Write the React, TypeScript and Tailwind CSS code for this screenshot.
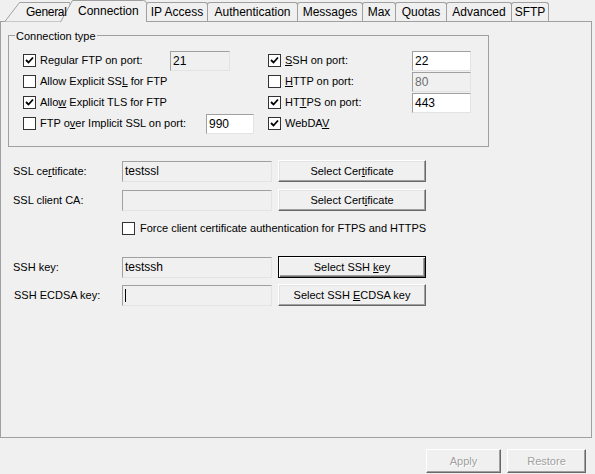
import React from "react";

const tabs = [
  { label: "IP Access", w: "w-[62px]" },
  { label: "Authentication", w: "w-[91px]" },
  { label: "Messages", w: "w-[66px]" },
  { label: "Max", w: "w-[34px]" },
  { label: "Quotas", w: "w-[52px]" },
  { label: "Advanced", w: "w-[66px]" },
  { label: "SFTP", w: "w-[38px]" },
];

function Check({ checked }: { checked?: boolean }) {
  return (
    <span className="flex h-[13px] w-[13px] shrink-0 items-center justify-center border border-[#333] bg-white">
      {checked && (
        <svg width="11" height="11" viewBox="0 0 11 11">
          <polyline points="2,5 4.5,7.5 9,2.5" fill="none" stroke="#000" strokeWidth="1.8" />
        </svg>
      )}
    </span>
  );
}

function Edit({
  value,
  className,
  white,
  dim,
}: {
  value?: React.ReactNode;
  className: string;
  white?: boolean;
  dim?: boolean;
}) {
  return (
    <div
      className={`flex shrink-0 items-center border border-t-[#a0a0a0] border-l-[#a0a0a0] border-r-[#e3e3e3] border-b-[#e3e3e3] pl-[2px] text-[12px] ${
        white ? "bg-white" : "bg-[#f0f0f0]"
      } ${dim ? "text-[#6d6d6d]" : "text-black"} ${className}`}
    >
      {value}
    </div>
  );
}

function Btn({ children, def }: { children: React.ReactNode; def?: boolean }) {
  return (
    <div
      className={`ml-[6px] flex h-[22px] w-[148px] shrink-0 items-center justify-center bg-[#f0f0f0] ${
        def
          ? "border border-black shadow-[inset_1px_1px_0_#fff,inset_-1px_-1px_0_#696969,inset_-2px_-2px_0_#a0a0a0]"
          : "border border-t-white border-l-white border-r-[#696969] border-b-[#696969] shadow-[inset_-1px_-1px_0_#a0a0a0,inset_1px_1px_0_#e3e3e3]"
      }`}
    >
      <span className="whitespace-pre">{children}</span>
    </div>
  );
}

function CheckRow({
  checked,
  label,
  lw,
  children,
}: {
  checked?: boolean;
  label: React.ReactNode;
  lw: string;
  children?: React.ReactNode;
}) {
  return (
    <div className="flex h-[21px] items-center">
      <Check checked={checked} />
      <span className={`ml-[4px] whitespace-nowrap ${lw}`}>{label}</span>
      {children}
    </div>
  );
}

export default function App() {
  return (
    <div className="h-[474px] w-[595px] overflow-hidden bg-[#f0f0f0] font-['Liberation_Sans',Arial,sans-serif] text-[11px] text-black">
      {/* tab strip */}
      <div className="relative z-10 flex h-[21px] items-end text-[12px]">
        <div className="relative ml-[4px] flex h-[19px] w-[66px] items-center pl-[22px]">
          <svg className="absolute inset-0" width="66" height="20" viewBox="0 0 66 20">
            <path d="M0.5,20 L15.5,0.5 H66 V20 Z" fill="#f0f0f0" stroke="#a0a0a0" />
          </svg>
          <span className="relative z-20 tracking-[-0.3px]">General</span>
        </div>
        <div className="relative z-10 -ml-[10px] mb-[-1px] flex h-[22px] w-[87px] items-center pl-[18px]">
          <svg className="absolute inset-0" width="87" height="22" viewBox="0 0 87 22">
            <path d="M0.5,22 L12.5,0.5 H83.5 Q86.5,0.5 86.5,3.5 V22" fill="#f0f0f0" stroke="#a0a0a0" />
          </svg>
          <span className="relative">Connection</span>
        </div>
        {tabs.map((t) => (
          <div
            key={t.label}
            className={`-ml-px flex h-[19px] items-center justify-center rounded-t-[3px] border border-b-0 border-[#a0a0a0] bg-[#f0f0f0] ${t.w}`}
          >
            {t.label}
          </div>
        ))}
      </div>

      {/* page */}
      <div className="h-[417px] w-[592px] border border-[#a0a0a0]">
        <div className="relative ml-[7px] mt-[13px] h-[112px] w-[481px] border border-[#a0a0a0] pl-[14px] pt-[14px]">
          <span className="absolute -top-[8px] left-[6px] bg-[#f0f0f0] px-[1px]">Connection type</span>
          <div className="grid grid-cols-[245px_1fr]">
            <div className="flex flex-col">
              <CheckRow checked lw="w-[130px]" label={<>Re<u>g</u>ular FTP on port:</>}>
                <Edit value="21" className="h-[20px] w-[60px]" />
              </CheckRow>
              <CheckRow lw="w-[130px]" label={<>Allow Explicit SS<u>L</u> for FTP</>} />
              <CheckRow checked lw="w-[130px]" label={<>Allo<u>w</u> Explicit TLS for FTP</>} />
              <CheckRow lw="w-[166px]" label={<>FTP o<u>v</u>er Implicit SSL on port:</>}>
                <Edit value="990" white className="h-[20px] w-[48px]" />
              </CheckRow>
            </div>
            <div className="flex flex-col">
              <CheckRow checked lw="w-[127px]" label={<><u>S</u>SH on port:</>}>
                <Edit value="22" white className="h-[20px] w-[59px]" />
              </CheckRow>
              <CheckRow lw="w-[127px]" label={<><u>H</u>TTP on port:</>}>
                <Edit value="80" dim className="h-[20px] w-[59px]" />
              </CheckRow>
              <CheckRow checked lw="w-[127px]" label={<>HT<u>T</u>PS on port:</>}>
                <Edit value="443" white className="h-[20px] w-[59px]" />
              </CheckRow>
              <CheckRow checked lw="w-[127px]" label={<>WebDA<u>V</u></>} />
            </div>
          </div>
        </div>

        <div className="flex flex-col pl-[12px]">
          <div className="mt-[13px] flex h-[22px] items-center">
            <span className="w-[109px]">SSL ce<u>r</u>tificate:</span>
            <Edit value="testssl" className="h-[21px] w-[150px]" />
            <Btn>Select Cer<u>t</u>ificate</Btn>
          </div>
          <div className="mt-[7px] flex h-[22px] items-center">
            <span className="w-[109px]">SSL client CA:</span>
            <Edit className="h-[21px] w-[150px]" />
            <Btn>Select Cert<u>i</u>ficate</Btn>
          </div>
          <div className="mt-[6px] flex h-[22px] items-center pl-[109px]">
            <Check />
            <span className="ml-[5px]">Force client certificate authentication for FTPS and HTTPS</span>
          </div>
          <div className="mt-[17px] flex h-[22px] items-center">
            <span className="w-[109px]">SSH key:</span>
            <Edit value="testssh" className="h-[21px] w-[150px]" />
            <Btn def>Select SSH <u>k</u>ey</Btn>
          </div>
          <div className="mt-[6px] flex h-[22px] items-center">
            <span className="w-[109px] pl-[1px]">SSH ECDSA key:</span>
            <Edit value={<span className="h-[13px] w-px bg-black" />} className="h-[21px] w-[150px]" />
            <Btn>Select SSH <u>E</u>CDSA key</Btn>
          </div>
        </div>
      </div>

      {/* footer */}
      <div className="mr-[9px] mt-[11px] flex justify-end gap-[6px] text-[#a0a0a0] [text-shadow:1px_1px_0_#fff]">
        <div className="flex h-[24px] w-[75px] items-center justify-center border border-t-white border-l-white border-r-[#696969] border-b-[#696969] shadow-[inset_-1px_-1px_0_#a0a0a0]">
          Apply
        </div>
        <div className="flex h-[24px] w-[79px] items-center justify-center border border-t-white border-l-white border-r-[#696969] border-b-[#696969] shadow-[inset_-1px_-1px_0_#a0a0a0]">
          Restore
        </div>
      </div>
    </div>
  );
}
